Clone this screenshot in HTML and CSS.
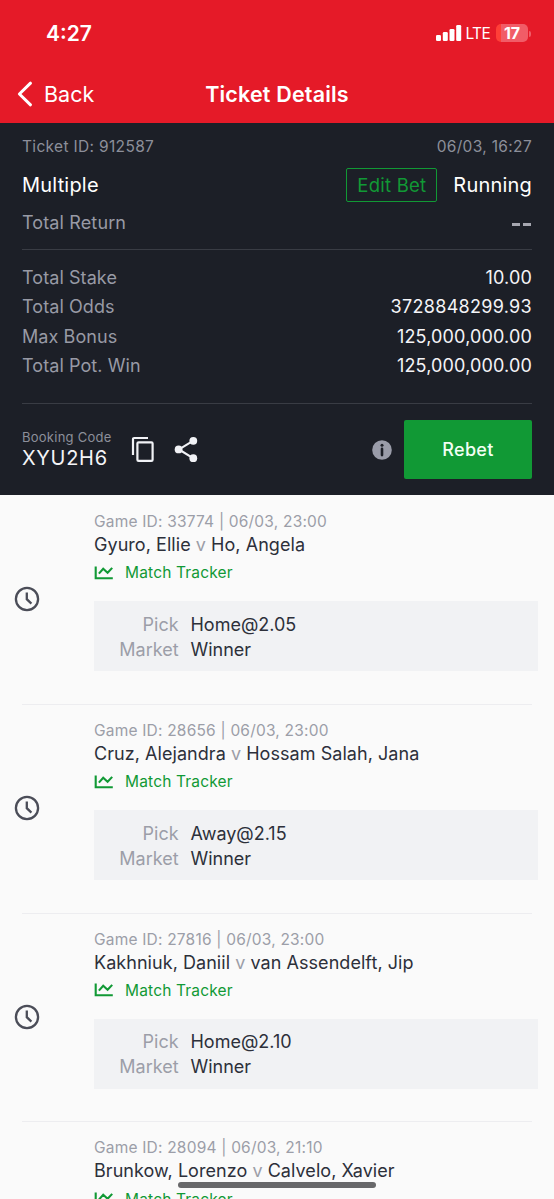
FILE: index.html
```html
<!DOCTYPE html>
<html lang="en">
<head>
<meta charset="utf-8">
<title>Ticket Details</title>
<link rel="stylesheet" href="styles.css">
</head>
<body>
<svg class="defs" aria-hidden="true">
  <symbol id="clock" viewBox="0 0 26 26"><circle cx="13" cy="13" r="11.1" fill="none" stroke="currentColor" stroke-width="2.3"/><path d="M12.8 6.6v6.6l4.6 4.4" fill="none" stroke="currentColor" stroke-width="2.3"/></symbol>
  <symbol id="chart" viewBox="0 0 20 14"><path d="M1.7 .5v11.7h17.1M4.9 7.6l4.3-4.8 4.4 4 4.6-4.9" fill="none" stroke="currentColor" stroke-width="2.1"/></symbol>
</svg>
<div class="screen">
  <header class="top">
    <div class="status">
      <span class="time">4:27</span>
      <div class="indicators">
        <svg class="signal" viewBox="0 0 26 16"><g fill="#fff"><rect x="0" y="10" width="5" height="6" rx="1.3"/><rect x="6.8" y="7" width="5" height="9" rx="1.3"/><rect x="13.5" y="4" width="5" height="12" rx="1.3"/><rect x="20.2" y="0" width="5" height="16" rx="1.3"/></g></svg>
        <span class="lte">LTE</span>
        <span class="battery">17</span><i class="battery-tip"></i>
      </div>
    </div>
    <nav class="nav">
      <div class="back"><svg viewBox="0 0 16 26"><path d="M13.5 2.2L2.4 13l11.1 10.8" fill="none" stroke="#fff" stroke-width="3" stroke-linecap="round" stroke-linejoin="round"/></svg><span>Back</span></div>
      <h1>Ticket Details</h1>
    </nav>
  </header>

  <section class="ticket">
    <div class="row meta"><span class="tid">Ticket ID: 912587</span><span class="tdate">06/03, 16:27</span></div>
    <div class="row type"><span class="multiple">Multiple</span><div class="state"><button class="edit">Edit Bet</button><span class="running">Running</span></div></div>
    <div class="row return"><span>Total Return</span><i class="dashes"></i></div>
    <div class="totals">
      <div class="row"><span>Total Stake</span><b>10.00</b></div>
      <div class="row"><span>Total Odds</span><b class="odds">3728848299.93</b></div>
      <div class="row"><span>Max Bonus</span><b>125,000,000.00</b></div>
      <div class="row"><span>Total Pot. Win</span><b>125,000,000.00</b></div>
    </div>
    <div class="booking">
      <div class="code"><small>Booking Code</small><strong>XYU2H6</strong></div>
      <svg class="copy" viewBox="0 0 24 27"><path d="M2 19V3.2Q2 2 3.2 2H17" fill="none" stroke="#f1f2f6" stroke-width="2.2"/><rect x="6.4" y="6.3" width="15.2" height="18.6" rx="1.2" fill="none" stroke="#f1f2f6" stroke-width="2.2"/></svg>
      <svg class="share" viewBox="0 0 24 27"><path d="M19 4.9L5 13.4l14 8.7" fill="none" stroke="#f1f2f6" stroke-width="2.2"/><g fill="#f1f2f6"><circle cx="19.3" cy="4.8" r="3.9"/><circle cx="4.6" cy="13.4" r="3.9"/><circle cx="19.3" cy="22.2" r="3.9"/></g></svg>
      <svg class="info" viewBox="0 0 20 20"><circle cx="10" cy="10" r="9.8" fill="#9a9ca9"/><circle cx="10" cy="5.2" r="1.5" fill="#1c1f27"/><path d="M10 8.9v6.2" stroke="#1c1f27" stroke-width="2.6" stroke-linecap="round"/></svg>
      <button class="rebet">Rebet</button>
    </div>
  </section>

  <main class="games">
    <article class="game">
      <svg class="clock"><use href="#clock"/></svg>
      <div class="body">
        <p class="gid">Game ID: 33774 | 06/03, 23:00</p>
        <h2>Gyuro, Ellie <em>v</em> Ho, Angela</h2>
        <a class="tracker"><svg><use href="#chart"/></svg>Match Tracker</a>
        <dl><dt>Pick</dt><dd>Home@2.05</dd><dt>Market</dt><dd>Winner</dd></dl>
      </div>
    </article>
    <article class="game">
      <svg class="clock"><use href="#clock"/></svg>
      <div class="body">
        <p class="gid">Game ID: 28656 | 06/03, 23:00</p>
        <h2>Cruz, Alejandra <em>v</em> Hossam Salah, Jana</h2>
        <a class="tracker"><svg><use href="#chart"/></svg>Match Tracker</a>
        <dl><dt>Pick</dt><dd>Away@2.15</dd><dt>Market</dt><dd>Winner</dd></dl>
      </div>
    </article>
    <article class="game">
      <svg class="clock"><use href="#clock"/></svg>
      <div class="body">
        <p class="gid">Game ID: 27816 | 06/03, 23:00</p>
        <h2>Kakhniuk, Daniil <em>v</em> van Assendelft, Jip</h2>
        <a class="tracker"><svg><use href="#chart"/></svg>Match Tracker</a>
        <dl><dt>Pick</dt><dd>Home@2.10</dd><dt>Market</dt><dd>Winner</dd></dl>
      </div>
    </article>
    <article class="game">
      <div class="body last">
        <p class="gid">Game ID: 28094 | 06/03, 21:10</p>
        <h2>Brunkow, Lorenzo <em>v</em> Calvelo, Xavier</h2>
        <a class="tracker"><svg><use href="#chart"/></svg>Match Tracker</a>
      </div>
    </article>
  </main>
  <div class="home-bar"></div>
</div>
</body>
</html>
```
FILE: styles.css
```css
* { box-sizing: border-box; margin: 0; padding: 0; }
body { font-family: Inter, "Liberation Sans", sans-serif; background: #fafafa; font-weight: 400; }
button { font: inherit; }
.defs { display: none; }
svg { display: block; flex: none; }
span, h1, h2, b, strong, p, a, small { white-space: nowrap; }
.screen { position: relative; width: 554px; height: 1199px; overflow: hidden; background: #fafafa; }

.top { height: 123px; background: #e51a28; color: #fff; padding-top: 18px; }
.status { height: 31px; display: flex; justify-content: space-between; align-items: center; padding: 0 23px 0 46px; }
.time { font-size: 21px; line-height: 31px; font-weight: 600; }
.indicators { display: flex; align-items: center; }
.signal { width: 26px; height: 16px; margin-top: -1px; }
.lte { font-size: 15.5px; font-weight: 400; margin-left: 4px; letter-spacing: -.7px; }
.battery { width: 32px; height: 18px; margin-left: 6px; margin-top: -1px; border-radius: 5px; background: linear-gradient(90deg, #ff3f37 17%, #f15c67 17%); font-size: 16px; line-height: 18px; font-weight: 700; text-align: center; }
.battery-tip { width: 2px; height: 6px; margin-left: 1px; border-radius: 0 2px 2px 0; background: #f15c67; }
.nav { height: 74px; display: grid; grid-template-columns: 1fr auto 1fr; align-items: center; padding: 0 17px; margin-top: 8px; }
.back { display: flex; align-items: center; gap: 11px; font-size: 21.5px; }
.back svg { width: 16px; height: 26px; }
.nav h1 { font-size: 21.5px; font-weight: 600; letter-spacing: .18px; }

.ticket { height: 372px; background: #1c1f27; color: #fff; padding: 9px 22px 0; }
.row { display: flex; justify-content: space-between; align-items: center; }
.meta { height: 29px; font-size: 15.5px; color: #8c8f9a; letter-spacing: .33px; }
.type { height: 48px; font-size: 20px; letter-spacing: .2px; }
.state { display: flex; align-items: center; gap: 16px; }
.edit { width: 91px; height: 34px; border: 1.5px solid #119935; border-radius: 2px; background: none; color: #119935; font-size: 18.5px; letter-spacing: .25px; }
.return { height: 41px; padding-bottom: 13px; font-size: 18px; letter-spacing: .13px; color: #989aa5; border-bottom: 1px solid #393c44; }
.dashes { width: 20px; height: 3px; margin-top: 3px; background: linear-gradient(90deg, #a6a7b0 8px, transparent 8px 11px, #a6a7b0 11px 19px, transparent 19px); }
.totals { height: 154px; padding-top: 12.8px; border-bottom: 1px solid #393c44; }
.totals .row { height: 29.4px; font-size: 18px; letter-spacing: .08px; color: #989aa5; }
.totals b { color: #f4f4f7; font-weight: 400; letter-spacing: .15px; }
.totals .odds { letter-spacing: .3px; }
.booking { display: flex; align-items: center; height: 91px; }
.code { width: 109px; display: flex; flex-direction: column; margin-top: -2px; }
.code small { font-size: 13px; line-height: 18px; color: #8c8f9a; letter-spacing: .25px; }
.code strong { font-size: 20px; line-height: 24px; font-weight: 400; letter-spacing: .7px; color: #f4f4f7; }
.copy { width: 24px; height: 27px; }
.share { width: 24px; height: 27px; margin-left: 19px; }
.info { width: 20px; height: 20px; margin-left: auto; margin-right: 12px; }
.rebet { width: 128px; height: 59px; border: 0; border-radius: 2px; background: #119935; color: #f2fff4; font-size: 18px; font-weight: 500; letter-spacing: .3px; }

.games { padding-top: 1px; }
.game { height: 208.8px; margin: 0 16px 0 14px; display: flex; align-items: center; background: linear-gradient(#ededf0, #ededf0) 8px 100% / 510px 1px no-repeat; }
.clock { width: 26px; height: 26px; margin-bottom: 2px; color: #4b4d58; }
.body { align-self: flex-start; margin-left: 54px; flex: 1; padding-top: 14px; }
.body.last { margin-left: 80px; }
.gid { font-size: 15.5px; line-height: 23px; color: #9c9ea8; letter-spacing: .2px; }
.game h2 { font-size: 18px; line-height: 24px; font-weight: 400; letter-spacing: .05px; color: #2d303a; }
.game em { font-style: normal; color: #9c9ea8; }
.tracker { display: flex; align-items: center; height: 31.5px; font-size: 15.5px; letter-spacing: .17px; color: #119935; gap: 11px; }
.tracker svg { width: 20px; height: 14px; }
.game dl { width: 444px; height: 70px; margin-top: 12.5px; padding: 10.8px 0 9px; background: #f1f2f4; display: grid; grid-template-columns: 84.6px 1fr; grid-auto-rows: 25px; column-gap: 11.9px; font-size: 18px; line-height: 25px; }
.game dt { text-align: right; color: #9c9ea8; }
.game dd { color: #2d303a; }
.home-bar { position: absolute; left: 178px; top: 1182px; width: 198px; height: 6px; border-radius: 3px; background: #68686a; }
```
